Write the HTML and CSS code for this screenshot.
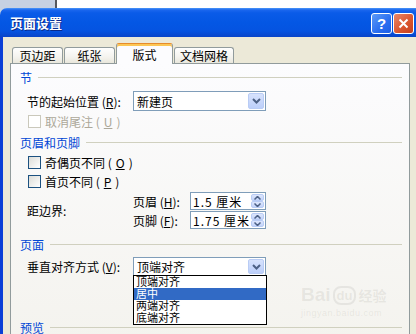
FILE: index.html
```html
<!DOCTYPE html>
<html lang="zh-CN">
<head>
    <meta charset="UTF-8">
    <meta name="viewport" content="width=device-width, initial-scale=1.0">
    <title>页面设置</title>
    <link rel="stylesheet" href="styles.css">
</head>
<body>
<div class="screen">
    <div class="dialog">
        <div class="titlebar">
            <span class="title">页面设置</span>
            <div class="caption-btns">
                <span class="cap cap-help">?</span>
                <span class="cap cap-close">
                    <svg width="11" height="11" viewBox="0 0 11 11"><path d="M1.5 1.5 L9.5 9.5 M9.5 1.5 L1.5 9.5" stroke="#fff" stroke-width="2"/></svg>
                </span>
            </div>
        </div>

        <div class="body">
            <div class="tabs">
                <span class="tab t1">页边距</span>
                <span class="tab t2">纸张</span>
                <span class="tab t3 active">版式</span>
                <span class="tab t4">文档网格</span>
            </div>

            <div class="panel">
                <!-- 节 -->
                <div class="group">节</div>
                <div class="row r-start">
                    <span class="lbl">节的起始位置 (<u>R</u>):</span>
                    <div class="combo">
                        <span class="combo-text">新建页</span>
                        <span class="drop"><svg width="9" height="6" viewBox="0 0 9 6"><path d="M1 1 L4.5 4.5 L8 1" fill="none" stroke="#4d6185" stroke-width="2"/></svg></span>
                    </div>
                </div>
                <div class="check disabled"><span class="box"></span>取消尾注 (<u>U</u>)</div>

                <!-- 页眉和页脚 -->
                <div class="group g2">页眉和页脚</div>
                <div class="check c1"><span class="box"></span>奇偶页不同 (<u>O</u>)</div>
                <div class="check c2"><span class="box"></span>首页不同 (<u>P</u>)</div>
                <div class="margins">
                    <span class="lbl">距边界:</span>
                    <div class="spins">
                        <div class="spin-row">
                            <span class="spin-lbl">页眉 (<u>H</u>):</span>
                            <div class="spin">
                                <span class="spin-text">1.5 厘米</span>
                                <span class="arrows">
                                    <span class="arr"><svg width="7" height="4" viewBox="0 0 7 4"><path d="M0.5 3.5 L3.5 0.5 L6.5 3.5" fill="none" stroke="#4d6185" stroke-width="1.5"/></svg></span>
                                    <span class="arr"><svg width="7" height="4" viewBox="0 0 7 4"><path d="M0.5 0.5 L3.5 3.5 L6.5 0.5" fill="none" stroke="#4d6185" stroke-width="1.5"/></svg></span>
                                </span>
                            </div>
                        </div>
                        <div class="spin-row">
                            <span class="spin-lbl">页脚 (<u>F</u>):</span>
                            <div class="spin">
                                <span class="spin-text">1.75 厘米</span>
                                <span class="arrows">
                                    <span class="arr"><svg width="7" height="4" viewBox="0 0 7 4"><path d="M0.5 3.5 L3.5 0.5 L6.5 3.5" fill="none" stroke="#4d6185" stroke-width="1.5"/></svg></span>
                                    <span class="arr"><svg width="7" height="4" viewBox="0 0 7 4"><path d="M0.5 0.5 L3.5 3.5 L6.5 0.5" fill="none" stroke="#4d6185" stroke-width="1.5"/></svg></span>
                                </span>
                            </div>
                        </div>
                    </div>
                </div>

                <!-- 页面 -->
                <div class="group g3">页面</div>
                <div class="row r-valign">
                    <span class="lbl">垂直对齐方式 (<u>V</u>):</span>
                    <div class="combo">
                        <span class="combo-text">顶端对齐</span>
                        <span class="drop"><svg width="9" height="6" viewBox="0 0 9 6"><path d="M1 1 L4.5 4.5 L8 1" fill="none" stroke="#4d6185" stroke-width="2"/></svg></span>
                        <ul class="list">
                            <li>顶端对齐</li>
                            <li class="sel">居中</li>
                            <li>两端对齐</li>
                            <li>底端对齐</li>
                        </ul>
                    </div>
                </div>

                <div class="group g4">预览</div>

                <!-- 水印 -->
                <div class="watermark">
                    <div class="wm-logo"><span class="wm-bai">Bai</span><span class="wm-du">du</span><span class="wm-jy">经验</span></div>
                    <div class="wm-url">jingyan.baidu.com</div>
                </div>
            </div>
        </div>
    </div>
</div>
</body>
</html>
```

FILE: styles.css
```css
body {
    margin: 0;
    font-family: "Noto Sans CJK SC", "Liberation Sans", sans-serif;
    font-size: 12px;
    color: #000;
}

.screen {
    width: 416px;
    height: 334px;
    overflow: hidden;
    background: linear-gradient(to right, #c6d1e2 0 55px, #55585e 55px 57px, #fff 57px);
}

.dialog {
    margin-top: 8px;
    width: 424px;
}

/* barra de titulo estilo XP */
.titlebar {
    height: 29px;
    box-sizing: border-box;
    padding: 0 10px 0 10px;
    display: flex;
    align-items: center;
    justify-content: space-between;
    border-radius: 7px 7px 0 0;
    background: linear-gradient(#4a95f8 0, #1a66ee 2px, #0a5be8 5px, #0457e4 50%, #0553e0 80%, #0944c8 100%);
}

.title {
    color: #fff;
    font-weight: bold;
    font-size: 13px;
    text-shadow: 1px 1px 0 #0a2a8a;
}

.caption-btns {
    display: flex;
    gap: 1px;
    margin-top: 1px;
}

.cap {
    width: 21px;
    height: 21px;
    box-sizing: border-box;
    border: 1px solid #fff;
    border-radius: 3px;
    display: flex;
    align-items: center;
    justify-content: center;
    color: #fff;
    font-family: "Liberation Sans", sans-serif;
    font-weight: bold;
    font-size: 15px;
}

.cap-help {
    background: linear-gradient(135deg, #5d9af7, #2a6ef0 60%, #1c5ee6);
}

.cap-close {
    background: linear-gradient(135deg, #e9876a, #d9542d 60%, #c5401f);
}

/* corpo */
.body {
    height: 297px;
    box-sizing: border-box;
    background: #ece9d8;
    border-left: 3px solid #0b3fd6;
    padding: 6px 0 0 7px;
}

.tabs {
    display: flex;
    align-items: flex-end;
    height: 20px;
}

.tab {
    box-sizing: border-box;
    height: 16px;
    border: 1px solid #919b9c;
    border-bottom: none;
    border-radius: 3px 3px 0 0;
    background: linear-gradient(#fefefe, #f4f3ee 60%, #e9e7dc);
    display: flex;
    align-items: center;
    justify-content: center;
    font-size: 12px;
    line-height: 12px;
}

.t1 { width: 51px; margin-left: 2px; }
.t2 { width: 51px; margin-left: 1px; }
.t3 { width: 57px; margin-left: 1px; }
.t4 { width: 60px; margin-left: 1px; }

.tab.active {
    position: relative;
    z-index: 1;
    height: 21px;
    margin-bottom: -1px;
    padding-top: 2px;
    border-top: 1px solid #e68b2c;
    box-shadow: inset 0 2px 0 #fcc654;
    background: #fcfcfe;
}

.panel {
    position: relative;
    width: 400px;
    height: 280px;
    box-sizing: border-box;
    border: 1px solid #919b9c;
    background: linear-gradient(#fcfcfe, #f4f3ee);
    padding: 6px 7px 0 9px;
}

.group {
    display: flex;
    align-items: center;
    gap: 6px;
    height: 14px;
    color: #0046d5;
}

.group::after {
    content: "";
    flex: 1;
    height: 1px;
    background: #d0d0bf;
}

.g2 { margin-top: 7px; }
.g3 { margin-top: 8px; }
.g4 { margin-top: 44px; }

.row {
    display: flex;
    align-items: center;
    padding-left: 7px;
}

.lbl {
    width: 106px;
    white-space: nowrap;
}

.r-start { margin-top: 7px; }
.r-valign { margin-top: 6px; }

.combo {
    position: relative;
    width: 133px;
    height: 20px;
    box-sizing: border-box;
    border: 1px solid #7f9db9;
    background: #fff;
    display: flex;
    align-items: center;
    justify-content: space-between;
    padding: 0 1px 0 3px;
}

.r-valign .combo { height: 19px; }

.drop {
    width: 16px;
    height: 16px;
    box-sizing: border-box;
    border: 1px solid #b9ccf5;
    border-radius: 2px;
    background: linear-gradient(#d7e2fc, #bccffa);
    display: flex;
    align-items: center;
    justify-content: center;
}

.r-valign .drop { height: 15px; }

.list {
    position: absolute;
    left: -1px;
    top: 100%;
    width: 134px;
    margin: 0;
    padding: 0;
    list-style: none;
    background: #fff;
    border: 1px solid #000;
    box-sizing: border-box;
    z-index: 2;
}

.list li {
    height: 12px;
    line-height: 12px;
    padding-left: 2px;
    font-family: "Liberation Sans", "Noto Sans CJK SC", sans-serif;
    font-size: 11px;
    overflow: hidden;
}

.list li.sel {
    background: #316ac5;
    color: #fff;
}

/* checkboxes */
.check {
    display: flex;
    align-items: center;
    height: 14px;
    padding-left: 8px;
    gap: 4px;
}

.check .box {
    width: 13px;
    height: 13px;
    box-sizing: border-box;
    border: 1px solid #1c5180;
    background: linear-gradient(135deg, #dcdcd7, #fff);
}

.check.disabled {
    margin-top: 3px;
    color: #aca899;
}

.check.disabled .box {
    border-color: #cac8bb;
    background: #fff;
}

.c1 { margin-top: 6px; }
.c2 { margin-top: 5px; }

/* distancia da borda */
.margins {
    display: flex;
    align-items: center;
    padding-left: 7px;
    margin-top: 4px;
}

.spins {
    display: flex;
    flex-direction: column;
    gap: 1px;
}

.spin-row {
    display: flex;
    align-items: center;
}

.spin-lbl {
    width: 57px;
    white-space: nowrap;
}

.spin {
    width: 76px;
    height: 18px;
    box-sizing: border-box;
    border: 1px solid #7f9db9;
    background: #fff;
    display: flex;
    align-items: center;
    justify-content: space-between;
    padding: 0 1px 0 2px;
}

.spin-text {
    letter-spacing: 1px;
}

.arrows {
    display: flex;
    flex-direction: column;
    width: 13px;
    height: 14px;
}

.arr {
    flex: 1;
    border: 1px solid #b9ccf5;
    border-radius: 2px;
    background: linear-gradient(#dde6fc, #c3d4fa);
    display: flex;
    align-items: center;
    justify-content: center;
}

/* marca d'agua */
.watermark {
    position: absolute;
    left: 290px;
    top: 220px;
    color: rgba(150, 150, 140, 0.16);
    font-family: "Liberation Sans", sans-serif;
}

.wm-logo {
    display: flex;
    align-items: center;
    gap: 2px;
    font-size: 19px;
    font-weight: bold;
}

.wm-du {
    font-size: 13px;
    border: 2px solid rgba(150, 150, 140, 0.16);
    border-radius: 8px;
    padding: 0 2px;
}

.wm-jy {
    font-family: "Noto Sans CJK SC", sans-serif;
    font-size: 14px;
}

.wm-url {
    font-size: 9px;
    margin-top: 2px;
    letter-spacing: 0.5px;
}
```
